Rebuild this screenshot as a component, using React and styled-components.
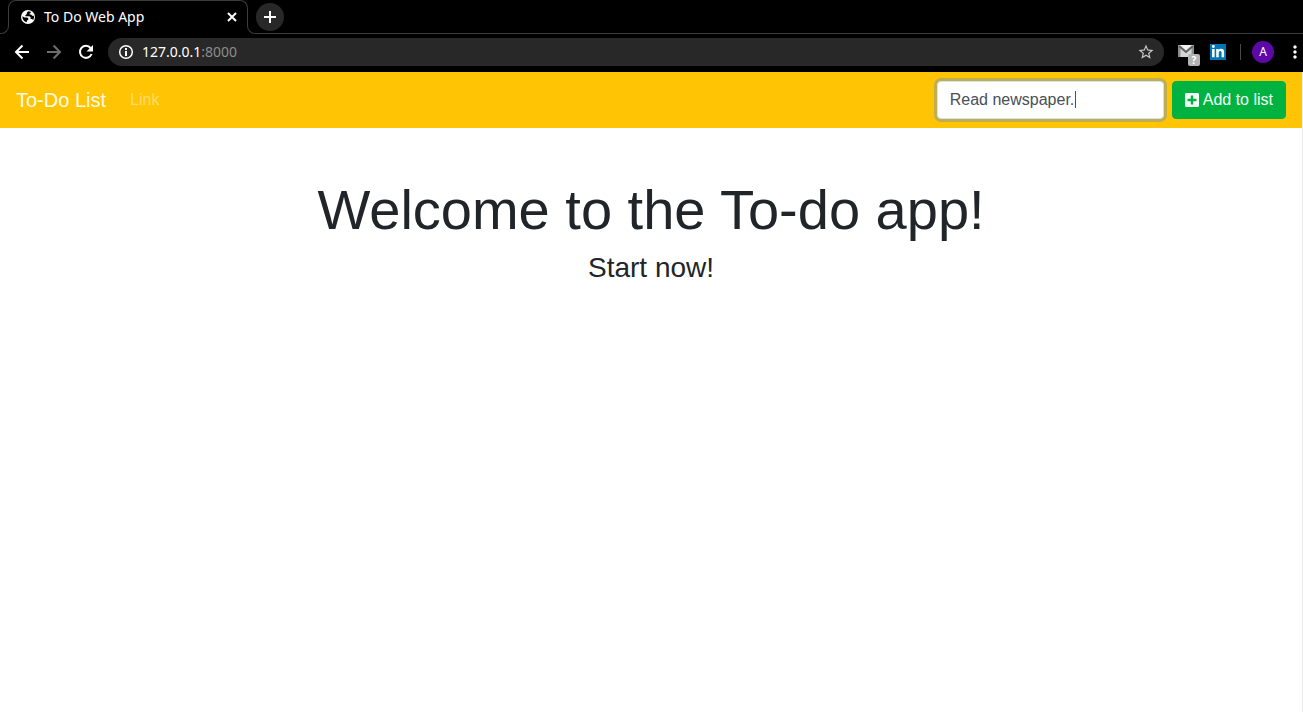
import React, { useState } from "react";
import styled, { createGlobalStyle } from "styled-components";
import { MdStarBorder, MdMoreVert } from "react-icons/md";
import { FaPlusSquare, FaLinkedinIn } from "react-icons/fa";

const GlobalStyle = createGlobalStyle`
  *, *::before, *::after { box-sizing: border-box; }
  body {
    margin: 0;
    background: #fff;
    color: #212529;
    font-family: "Liberation Sans", Arial, sans-serif;
    font-size: 16px;
    line-height: 24px;
  }
  button, input { font: inherit; }
  svg { flex: none; }
`;

const Window = styled.div`
  min-height: 100vh;
  display: flex;
  flex-direction: column;
`;

const Chrome = styled.header`
  background: #000;
  color: #fff;
  font-family: "Noto Sans", sans-serif;
`;

const TabStrip = styled.div`
  display: flex;
  height: 34px;
`;

const StripEdge = styled.div`
  align-self: flex-end;
  width: 9px;
  height: 8px;
  border: 0 solid #3c3c3c;
  border-bottom-width: 1px;
  border-right-width: 1px;
  border-bottom-right-radius: 8px;
`;

const StripRest = styled.div`
  flex: 1;
  display: flex;
  flex-direction: column;
  justify-content: space-between;
  margin-left: -1px;
`;

const StripLine = styled.div`
  height: 8px;
  border: 0 solid #3c3c3c;
  border-bottom-width: 1px;
  border-left-width: 1px;
  border-bottom-left-radius: 8px;
`;

const Tab = styled.div`
  display: flex;
  align-items: center;
  width: 240px;
  height: 26px;
  margin-left: -1px;
  padding: 6px 7px 0 11px;
  border: 1px solid #3c3c3c;
  border-bottom: 0;
  border-radius: 8px 8px 0 0;
`;

const TabTitle = styled.span`
  flex: 1;
  margin-left: 8px;
  font-size: 14px;
  line-height: 20px;
  white-space: nowrap;
`;

const IconButton = styled.button`
  display: flex;
  align-items: center;
  justify-content: center;
  flex: none;
  width: ${(p) => p.$size}px;
  height: ${(p) => p.$size}px;
  padding: 0;
  border: 0;
  border-radius: 50%;
  background: ${(p) => p.$fill || "transparent"};
  color: ${(p) => p.$color || "#fff"};
`;

const NewTabSlot = styled.div`
  height: 26px;
  padding: 3px 0 0 9px;
`;

const Toolbar = styled.div`
  display: flex;
  align-items: center;
  height: 38px;
  padding: 0 0 2px 12px;
`;

const NavButtons = styled.div`
  display: flex;
  gap: 12px;
`;

const AddressBar = styled.div`
  flex: 1;
  display: flex;
  align-items: center;
  height: 28px;
  margin-left: 12px;
  padding: 0 8px 0 10px;
  border-radius: 14px;
  background: #282828;
`;

const Address = styled.span`
  flex: 1;
  margin-left: 8px;
  font-size: 14px;
  line-height: 20px;
`;

const Port = styled.span`
  color: #8c8c8c;
`;

const Extensions = styled.div`
  display: flex;
  align-items: center;
  margin-left: 14px;
`;

const MailButton = styled.button`
  position: relative;
  display: flex;
  width: 20px;
  height: 16px;
  padding: 0;
  border: 0;
  background: transparent;
`;

const MailBadge = styled.span`
  position: absolute;
  right: -2px;
  bottom: -6px;
  width: 12px;
  height: 12px;
  border-radius: 2px;
  background: #b4b4b4;
  color: #fff;
  font-size: 10px;
  font-weight: 700;
  line-height: 12px;
  text-align: center;
`;

const LinkedInButton = styled.button`
  display: flex;
  align-items: center;
  justify-content: center;
  width: 16px;
  height: 16px;
  margin-left: 12px;
  padding: 0;
  border: 0;
  background: #0077b5;
  color: #fff;
`;

const Divider = styled.span`
  width: 1px;
  height: 16px;
  margin: 0 11px 0 14px;
  background: #4a4a4a;
`;

const Avatar = styled.button`
  width: 22px;
  height: 22px;
  padding: 0;
  border: 0;
  border-radius: 50%;
  background: #5e08a8;
  color: #fff;
  font-size: 12px;
  line-height: 22px;
`;

const MenuSlot = styled.div`
  width: 29px;
  padding-left: 11px;
  overflow: hidden;
`;

const Page = styled.div`
  flex: 1;
  border-right: 1px solid #ebebeb;
`;

const Navbar = styled.nav`
  display: flex;
  align-items: center;
  padding: 9px 16px;
  background: #ffc404;
`;

const Brand = styled.a`
  margin-right: 16px;
  color: #fffbe6;
  font-size: 20px;
  line-height: 30px;
  text-decoration: none;
`;

const NavLink = styled.a`
  flex: 1;
  padding-left: 8px;
  color: #ffdc6b;
  text-decoration: none;
`;

const TaskForm = styled.form`
  display: flex;
  gap: 8px;
`;

const Field = styled.div`
  position: relative;
`;

const TaskInput = styled.input`
  display: block;
  width: 227px;
  height: 38px;
  padding: 6px 12px;
  border: 1px solid #d5e3ea;
  border-radius: 4px;
  outline: 0;
  background: #fff;
  color: #495057;
  caret-color: transparent;
  box-shadow: 0 0 0 3px #bfae52;
`;

const Caret = styled.span`
  position: absolute;
  top: 10px;
  left: 138px;
  width: 1px;
  height: 17px;
  background: #495057;
`;

const AddButton = styled.button`
  display: flex;
  align-items: center;
  gap: 4px;
  height: 38px;
  padding: 0 12px;
  border: 1px solid #00b341;
  border-radius: 4px;
  background: #00b341;
  color: #f4fff7;
  white-space: nowrap;
`;

const PlusSquare = styled(FaPlusSquare)`
  width: 14px;
  height: 16px;
`;

const Welcome = styled.main`
  padding: 48px 16px;
  text-align: center;
`;

const Title = styled.h1`
  margin: 0 0 8px;
  font-size: 56px;
  font-weight: 400;
  line-height: 68px;
`;

const Subtitle = styled.h2`
  margin: 0;
  font-size: 28px;
  font-weight: 400;
  line-height: 32px;
`;

function GlobeIcon() {
  return (
    <svg width="16" height="16" viewBox="0 0 16 16" aria-hidden="true">
      <circle cx="8" cy="8" r="7" fill="#fff" />
      <path
        d="M8.2 2.3 6.8 3.8v1.4L5.4 6.1v1.2h4l1.2 1v1.6h1.5l1.1 1c.7-1.2 1-2.7.7-4.2h-1.7l-1.2-1.2H9.6V4.2h1.1V2.8z"
        fill="#000"
      />
      <path
        d="M2.4 7.2c-.3 3 1.4 5.3 4.4 6v-1.4l1.6-1.2V9.4L7.2 8.6H4.6z"
        fill="#000"
      />
    </svg>
  );
}

function LineIcon({ size, width = 2, children }) {
  return (
    <svg
      width={size}
      height={size}
      viewBox={`0 0 ${size} ${size}`}
      fill="none"
      stroke="currentColor"
      strokeWidth={width}
      aria-hidden="true"
    >
      {children}
    </svg>
  );
}

function MailIcon() {
  return (
    <svg width="20" height="16" viewBox="0 0 20 16" aria-hidden="true">
      <rect x="0" y="1" width="16" height="12" rx="1" fill="#d6d6d6" />
      <path d="M0 2h2.5v11H1a1 1 0 0 1-1-1zM13.500 2H16v10a1 1 0 0 1-1 1h-1.500z" fill="#8c8c8c" />
      <path d="M1 2l7 6 7-6" fill="none" stroke="#5f5f5f" strokeWidth="2" />
      <path d="M2.500 1h11L8 6z" fill="#f2f2f2" />
    </svg>
  );
}

export default function App() {
  const [task, setTask] = useState("Read newspaper.");
  return (
    <Window>
      <GlobalStyle />
      <Chrome>
        <TabStrip>
          <StripEdge />
          <Tab>
            <GlobeIcon />
            <TabTitle>To Do Web App</TabTitle>
            <IconButton $size={16} aria-label="Close tab">
              <LineIcon size={16}>
                <path d="M4 4l8 8M12 4l-8 8" />
              </LineIcon>
            </IconButton>
          </Tab>
          <StripRest>
            <NewTabSlot>
              <IconButton $size={28} $fill="#282828" aria-label="New tab">
                <LineIcon size={14}>
                  <path d="M7 1v12M1 7h12" />
                </LineIcon>
              </IconButton>
            </NewTabSlot>
            <StripLine />
          </StripRest>
        </TabStrip>
        <Toolbar>
          <NavButtons>
            <IconButton $size={20} aria-label="Back">
              <LineIcon size={20}>
                <path d="M17 10H4.500M10.500 3.500L4 10l6.500 6.500" />
              </LineIcon>
            </IconButton>
            <IconButton $size={20} $color="#6e6e6e" aria-label="Forward">
              <LineIcon size={20}>
                <path d="M3 10h12.500M9.500 3.500L16 10l-6.500 6.500" />
              </LineIcon>
            </IconButton>
            <IconButton $size={20} aria-label="Reload">
              <LineIcon size={20}>
                <path d="M15.600 12A6 6 0 1 1 14.600 6" />
                <path d="M17 3v6.500h-6.500z" fill="currentColor" stroke="none" />
              </LineIcon>
            </IconButton>
          </NavButtons>
          <AddressBar>
            <LineIcon size={16}>
              <circle cx="8" cy="8" r="6.300" strokeWidth="1.500" />
              <path d="M8 4v2M8 7v5" />
            </LineIcon>
            <Address>
              127.0.0.1<Port>:8000</Port>
            </Address>
            <IconButton $size={20} $color="#c8c8c8" aria-label="Bookmark">
              <MdStarBorder size={18} />
            </IconButton>
          </AddressBar>
          <Extensions>
            <MailButton aria-label="Mail">
              <MailIcon />
              <MailBadge>?</MailBadge>
            </MailButton>
            <LinkedInButton aria-label="LinkedIn">
              <FaLinkedinIn size={14} />
            </LinkedInButton>
            <Divider />
            <Avatar>A</Avatar>
            <MenuSlot>
              <IconButton $size={20} aria-label="Menu">
                <MdMoreVert size={20} />
              </IconButton>
            </MenuSlot>
          </Extensions>
        </Toolbar>
      </Chrome>
      <Page>
        <Navbar>
          <Brand href="#">To-Do List</Brand>
          <NavLink href="#">Link</NavLink>
          <TaskForm onSubmit={(e) => e.preventDefault()}>
            <Field>
              <TaskInput
                aria-label="New task"
                value={task}
                onChange={(e) => setTask(e.target.value)}
              />
              <Caret />
            </Field>
            <AddButton type="submit">
              <PlusSquare />
              Add to list
            </AddButton>
          </TaskForm>
        </Navbar>
        <Welcome>
          <Title>Welcome to the To-do app!</Title>
          <Subtitle>Start now!</Subtitle>
        </Welcome>
      </Page>
    </Window>
  );
}
